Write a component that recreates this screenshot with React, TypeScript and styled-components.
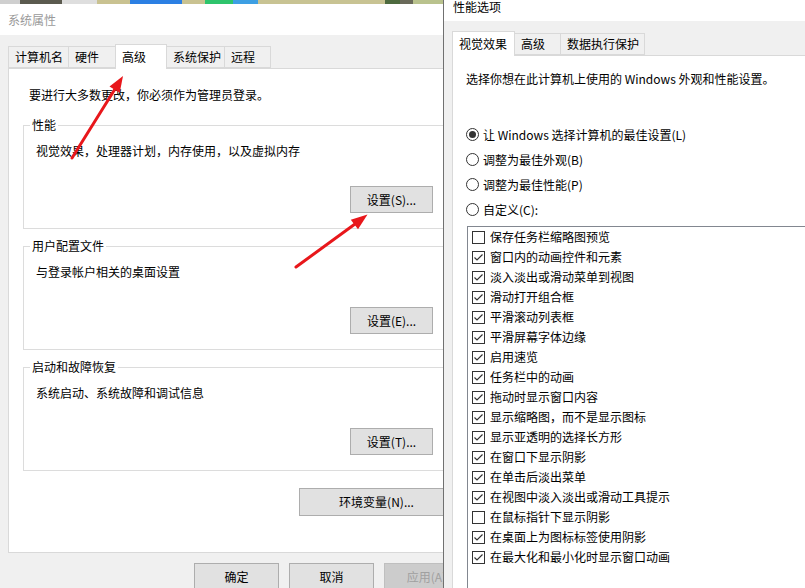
import React from 'react'
import styled, { createGlobalStyle } from 'styled-components'

const GlobalStyle = createGlobalStyle`
  html, body {
    margin: 0;
    padding: 0;
    background: #f0f0f0;
  }
  body {
    font-family: "Noto Sans CJK SC", "Noto Sans", "Liberation Sans", sans-serif;
    font-size: 12px;
    line-height: 16px;
    color: #000;
  }
  * {
    box-sizing: border-box;
  }
`

const leftTabs = [
  { label: '计算机名', w: 61 },
  { label: '硬件', w: 48 },
  { label: '高级', w: 52, active: true },
  { label: '系统保护', w: 59 },
  { label: '远程', w: 47 },
]

const rightTabs = [
  { label: '视觉效果', w: 63, active: true },
  { label: '高级', w: 47 },
  { label: '数据执行保护', w: 85 },
]

const groups = [
  { title: '性能', text: '视觉效果，处理器计划，内存使用，以及虚拟内存', button: '设置(S)...', mt: 14 },
  { title: '用户配置文件', text: '与登录帐户相关的桌面设置', button: '设置(E)...', mt: 9 },
  { title: '启动和故障恢复', text: '系统启动、系统故障和调试信息', button: '设置(T)...', mt: 9 },
]

const radios = [
  { label: '让 Windows 选择计算机的最佳设置(L)', on: true },
  { label: '调整为最佳外观(B)' },
  { label: '调整为最佳性能(P)' },
  { label: '自定义(C):' },
]

const effects = [
  { label: '保存任务栏缩略图预览', on: false },
  { label: '窗口内的动画控件和元素', on: true },
  { label: '淡入淡出或滑动菜单到视图', on: true },
  { label: '滑动打开组合框', on: true },
  { label: '平滑滚动列表框', on: true },
  { label: '平滑屏幕字体边缘', on: true },
  { label: '启用速览', on: true },
  { label: '任务栏中的动画', on: true },
  { label: '拖动时显示窗口内容', on: true },
  { label: '显示缩略图，而不是显示图标', on: true },
  { label: '显示亚透明的选择长方形', on: true },
  { label: '在窗口下显示阴影', on: true },
  { label: '在单击后淡出菜单', on: true },
  { label: '在视图中淡入淡出或滑动工具提示', on: true },
  { label: '在鼠标指针下显示阴影', on: false },
  { label: '在桌面上为图标标签使用阴影', on: true },
  { label: '在最大化和最小化时显示窗口动画', on: true },
]

const App: React.FC = () => {
  return (
    <>
      <GlobalStyle />
      <Screen>
        <SystemWindow>
          <DesktopStrip />
          <TitleBar $inactive $height={31}>系统属性</TitleBar>
          <SysBody>
            <TabStrip $mt={9}>
              {leftTabs.map(t => (
                <Tab key={t.label} $w={t.w} $active={t.active}>{t.label}</Tab>
              ))}
            </TabStrip>
            <SysPanel>
              <Intro>要进行大多数更改，你必须作为管理员登录。</Intro>
              {groups.map(g => (
                <GroupBox key={g.title} $mt={g.mt}>
                  <GroupLegend>{g.title}</GroupLegend>
                  <GroupText>{g.text}</GroupText>
                  <ButtonRow $mt={27}>
                    <WinButton $w={83}>{g.button}</WinButton>
                  </ButtonRow>
                </GroupBox>
              ))}
              <ButtonRow $mt={17}>
                <WinButton $w={155} $h={28}>环境变量(N)...</WinButton>
              </ButtonRow>
            </SysPanel>
            <DialogButtons>
              <WinButton $w={85}>确定</WinButton>
              <WinButton $w={85}>取消</WinButton>
              <WinButton $w={85} $disabled>应用(A)</WinButton>
            </DialogButtons>
          </SysBody>
        </SystemWindow>

        <PerfWindow>
          <TitleBar $height={21} $top>性能选项</TitleBar>
          <PerfBody>
            <TabStrip $mt={10}>
              {rightTabs.map(t => (
                <Tab key={t.label} $w={t.w} $active={t.active}>{t.label}</Tab>
              ))}
            </TabStrip>
            <PerfPanel>
              <PerfIntro>选择你想在此计算机上使用的 Windows 外观和性能设置。</PerfIntro>
              <RadioGroup>
                {radios.map(r => (
                  <RadioRow key={r.label}>
                    <RadioCircle $on={r.on} />
                    <span>{r.label}</span>
                  </RadioRow>
                ))}
              </RadioGroup>
              <EffectList>
                {effects.map(e => (
                  <EffectRow key={e.label}>
                    <CheckBox>
                      {e.on && (
                        <svg width="11" height="11" viewBox="0 0 11 11">
                          <polyline points="1.5,5.5 4,8 9.5,2.5" fill="none" stroke="#333" strokeWidth="1.2" />
                        </svg>
                      )}
                    </CheckBox>
                    <span>{e.label}</span>
                  </EffectRow>
                ))}
              </EffectList>
            </PerfPanel>
          </PerfBody>
        </PerfWindow>

        <ArrowLayer width="805" height="588" viewBox="0 0 805 588">
          <line x1="72" y1="158" x2="115" y2="89" stroke="#e8171b" strokeWidth="3" strokeLinecap="round" />
          <polygon points="123,76 119.7,92.8 109.5,86.4" fill="#e8171b" />
          <line x1="296" y1="267" x2="355" y2="224" stroke="#e8171b" strokeWidth="3" strokeLinecap="round" />
          <polygon points="367.5,214.5 358,229.3 350.8,219.7" fill="#e8171b" />
        </ArrowLayer>
      </Screen>
    </>
  )
}

export default App

const Screen = styled.div`
  position: relative;
  display: flex;
  width: 805px;
  height: 588px;
  overflow: hidden;
`

const SystemWindow = styled.div`
  flex: none;
  width: 443px;
  height: 588px;
  overflow: hidden;
  display: flex;
  flex-direction: column;
  background: #f0f0f0;
`

const DesktopStrip = styled.div`
  flex: none;
  height: 4px;
  background: linear-gradient(
    to right,
    #cfcfcf 0 20px,
    #5b5a4f 20px 62px,
    #dedede 62px 97px,
    #c9c291 97px 130px,
    #2b7fe3 130px 182px,
    #c9c291 182px 205px,
    #2ec46c 205px 233px,
    #3d9fe3 233px 258px,
    #c8c393 258px 385px,
    #4d6a3e 385px 400px,
    #6a6a5a 400px 413px,
    #b9c28d 413px 443px
  );
`

const TitleBar = styled.div<{ $inactive?: boolean; $height: number; $top?: boolean }>`
  flex: none;
  height: ${({ $height }) => $height}px;
  background: #fff;
  display: flex;
  align-items: ${({ $top }) => ($top ? 'flex-start' : 'center')};
  padding-left: ${({ $top }) => ($top ? 9 : 8)}px;
  line-height: ${({ $top }) => ($top ? '12px' : '16px')};
  padding-top: ${({ $top }) => ($top ? 1 : 0)}px;
  color: ${({ $inactive }) => ($inactive ? '#9a9a9a' : '#000')};
  white-space: nowrap;
`

const SysBody = styled.div`
  width: 477px;
  padding: 0 8px;
  display: flex;
  flex-direction: column;
`

const TabStrip = styled.div<{ $mt: number }>`
  display: flex;
  align-items: flex-end;
  height: 24px;
  margin-top: ${({ $mt }) => $mt}px;
`

const Tab = styled.div<{ $w: number; $active?: boolean }>`
  position: relative;
  z-index: ${({ $active }) => ($active ? 2 : 1)};
  flex: none;
  width: ${({ $w }) => $w}px;
  height: ${({ $active }) => ($active ? 25 : 22)}px;
  margin-bottom: ${({ $active }) => ($active ? -1 : 0)}px;
  margin-left: -1px;
  padding-left: 6px;
  display: flex;
  align-items: center;
  background: ${({ $active }) => ($active ? '#fff' : '#f0f0f0')};
  border: 1px solid #d9d9d9;
  border-bottom: ${({ $active }) => ($active ? 'none' : '1px solid #d9d9d9')};
  white-space: nowrap;

  &:first-child {
    margin-left: 0;
  }
`

const SysPanel = styled.div`
  height: 485px;
  background: #fff;
  border: 1px solid #d9d9d9;
  padding: 18px 14px 0 14px;
  display: flex;
  flex-direction: column;
`

const Intro = styled.div`
  margin-left: 6px;
  white-space: nowrap;
`

const GroupBox = styled.fieldset<{ $mt: number }>`
  margin: ${({ $mt }) => $mt}px 0 0;
  padding: 10px 20px 15px 12px;
  border: 1px solid #dcdcdc;
  min-width: 0;
`

const GroupLegend = styled.legend`
  padding: 0 2px;
  margin-left: -6px;
  line-height: 16px;
  white-space: nowrap;
`

const GroupText = styled.div`
  white-space: nowrap;
`

const ButtonRow = styled.div<{ $mt: number }>`
  display: flex;
  justify-content: flex-end;
  margin-top: ${({ $mt }) => $mt}px;
`

const WinButton = styled.div<{ $w: number; $h?: number; $disabled?: boolean }>`
  flex: none;
  width: ${({ $w }) => $w}px;
  height: ${({ $h }) => $h ?? 27}px;
  display: flex;
  align-items: center;
  justify-content: center;
  background: ${({ $disabled }) => ($disabled ? '#cccccc' : '#e1e1e1')};
  border: 1px solid ${({ $disabled }) => ($disabled ? '#bfbfbf' : '#adadad')};
  color: ${({ $disabled }) => ($disabled ? '#a0a0a0' : '#000')};
  white-space: nowrap;
`

const DialogButtons = styled.div`
  display: flex;
  justify-content: flex-end;
  gap: 10px;
  margin-top: 10px;
`

const PerfWindow = styled.div`
  flex: 1;
  height: 588px;
  overflow: hidden;
  display: flex;
  flex-direction: column;
  background: #f0f0f0;
  border-left: 1px solid #707070;
`

const PerfBody = styled.div`
  width: 430px;
  padding: 0 0 0 8px;
  display: flex;
  flex-direction: column;
`

const PerfPanel = styled.div`
  height: 560px;
  background: #fff;
  border: 1px solid #d9d9d9;
  padding: 15px 0 0 13px;
  display: flex;
  flex-direction: column;
`

const PerfIntro = styled.div`
  white-space: nowrap;
`

const RadioGroup = styled.div`
  display: flex;
  flex-direction: column;
  margin-top: 35px;
`

const RadioRow = styled.div`
  height: 25px;
  display: flex;
  align-items: center;
  gap: 4px;
  white-space: nowrap;
`

const RadioCircle = styled.span<{ $on?: boolean }>`
  flex: none;
  width: 13px;
  height: 13px;
  border: 1px solid #333;
  border-radius: 50%;
  background: #fff;
  display: inline-flex;
  align-items: center;
  justify-content: center;

  &::after {
    content: '';
    width: 7px;
    height: 7px;
    border-radius: 50%;
    background: ${({ $on }) => ($on ? '#333' : 'transparent')};
  }
`

const EffectList = styled.div`
  margin: 4px 0 0 1px;
  height: 400px;
  border: 1px solid #828790;
  border-right: none;
  padding-left: 4px;
  display: flex;
  flex-direction: column;
`

const EffectRow = styled.div`
  height: 20px;
  display: flex;
  align-items: center;
  gap: 5px;
  white-space: nowrap;
`

const CheckBox = styled.span`
  flex: none;
  width: 13px;
  height: 13px;
  border: 1px solid #333;
  background: #fff;
  display: inline-flex;
  align-items: center;
  justify-content: center;
`

const ArrowLayer = styled.svg`
  position: absolute;
  left: 0;
  top: 0;
  pointer-events: none;
`
